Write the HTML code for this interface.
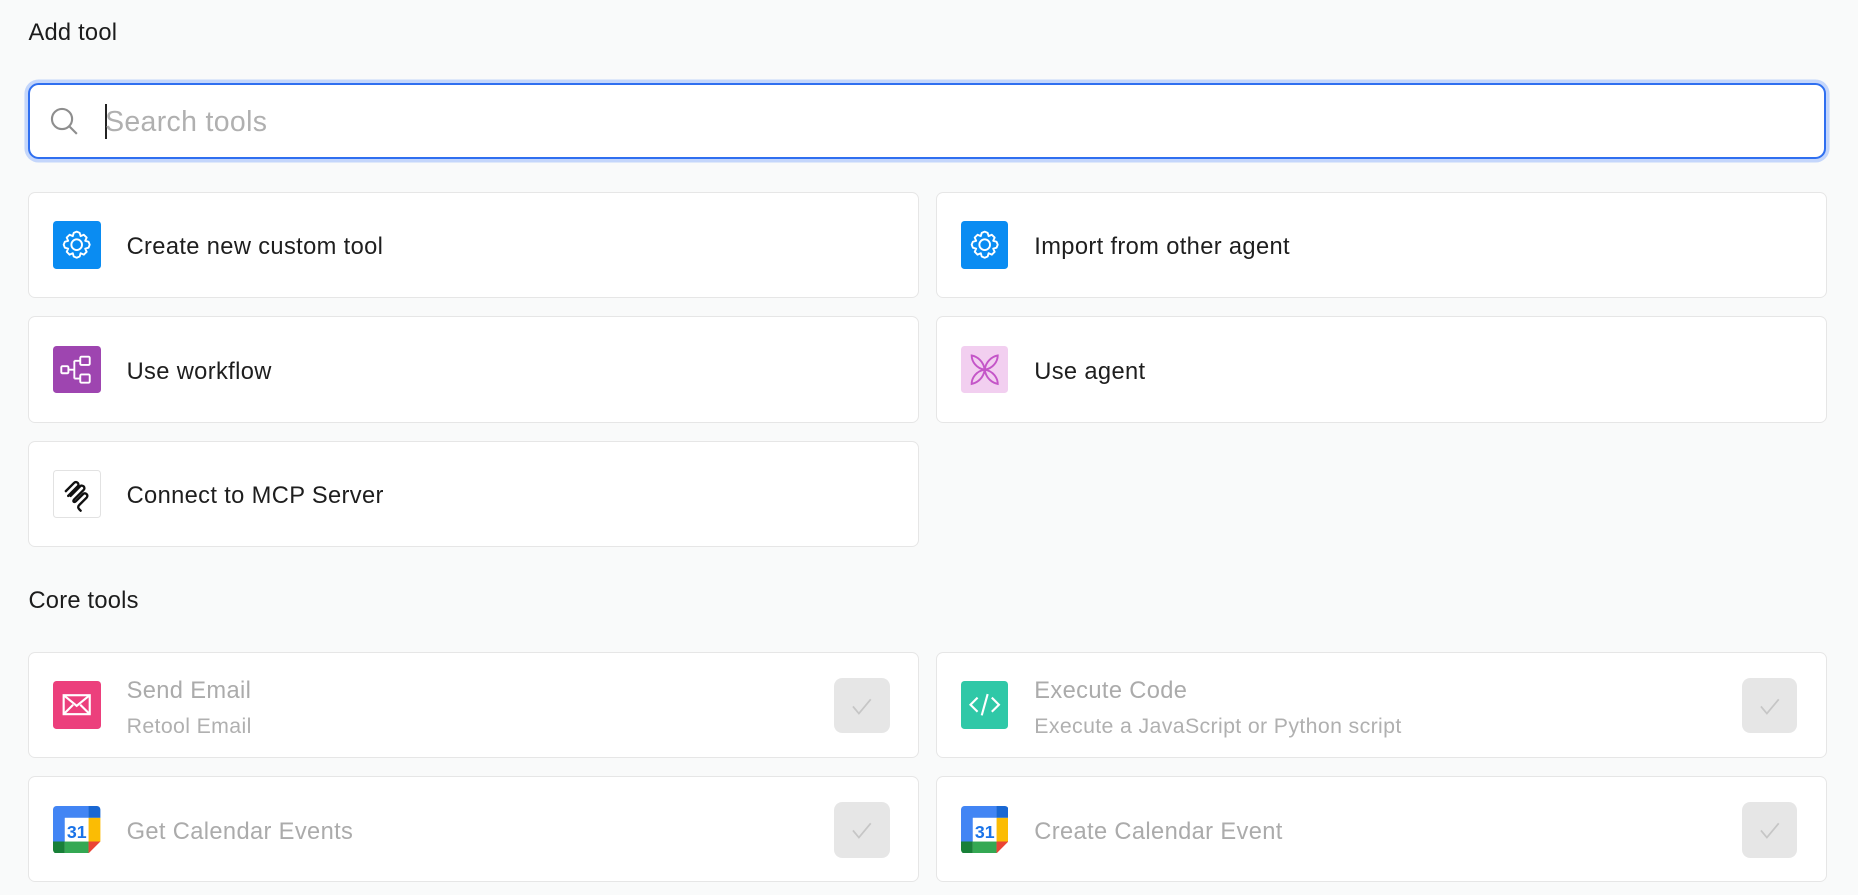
<!DOCTYPE html>
<html><head><meta charset="utf-8"><style>
html,body{margin:0;padding:0;}
body{width:1568px;height:755px;background:#f9fafa;font-family:"Liberation Sans",Arial,sans-serif;zoom:1.18495;overflow:hidden;position:relative;}
.h{position:absolute;left:24px;font-size:20px;color:#1c1c1c;letter-spacing:0.2px;}
.search{position:absolute;left:24px;top:70px;width:1514px;height:61px;border:2px solid #2f6ff0;border-radius:9px;background:#fff;box-shadow:0 0 0 3px #c4d6fb;}
.search .ph{position:absolute;left:63px;top:18px;font-size:24px;color:#b0b0b0;letter-spacing:0.3px;}
.search .cur{position:absolute;left:63px;top:16px;width:1.5px;height:30px;background:#222;}
.card{position:absolute;width:750px;height:88px;background:#fff;border:1.5px solid #e6e6e6;border-radius:6px;box-sizing:content-box;}
.ic{position:absolute;left:20px;top:24px;width:40px;height:40px;border-radius:3px;}
.t{position:absolute;left:82px;top:35px;font-size:20px;color:#1e1e1e;letter-spacing:0.3px;}
.dis .t{color:#ababab;top:21px;}
.sub{position:absolute;left:82px;top:52px;font-size:18px;color:#b0b0b0;letter-spacing:0.3px;}
.chk{position:absolute;right:24px;top:21px;width:47px;height:47px;border-radius:7px;background:#e6e6e6;}
</style></head><body>
<div class="h" style="top:17px">Add tool</div>
<div class="search">
<svg style="position:absolute;left:16px;top:18px" width="26" height="26" viewBox="0 0 26 26"><circle cx="11" cy="11" r="8.5" fill="none" stroke="#8e8e8e" stroke-width="1.8"/><path d="M17 17l6.5 6.5" stroke="#8e8e8e" stroke-width="1.8"/></svg>
<div class="cur"></div><div class="ph">Search tools</div></div>

<div class="card" style="left:24px;top:162px"><div class="ic" style="background:#0a8cf2"><svg width="40" height="40" viewBox="0 0 40 40"><path d="M20 9l2.5 1 .8 2.8 2.7-1.2 2.4 2.4-1.2 2.7 2.8.8 1 2.5-1 2.5-2.8.8 1.2 2.7-2.4 2.4-2.7-1.2-.8 2.8-2.5 1-2.5-1-.8-2.8-2.7 1.2-2.4-2.4 1.2-2.7-2.8-.8-1-2.5 1-2.5 2.8-.8-1.2-2.7 2.4-2.4 2.7 1.2.8-2.8z" fill="none" stroke="#fff" stroke-width="1.6" stroke-linejoin="round"/><circle cx="20" cy="20" r="4.5" fill="none" stroke="#fff" stroke-width="1.6"/></svg></div><div class="t">Create new custom tool</div></div>
<div class="card" style="left:790px;top:162px"><div class="ic" style="background:#0a8cf2"><svg width="40" height="40" viewBox="0 0 40 40"><path d="M20 9l2.5 1 .8 2.8 2.7-1.2 2.4 2.4-1.2 2.7 2.8.8 1 2.5-1 2.5-2.8.8 1.2 2.7-2.4 2.4-2.7-1.2-.8 2.8-2.5 1-2.5-1-.8-2.8-2.7 1.2-2.4-2.4 1.2-2.7-2.8-.8-1-2.5 1-2.5 2.8-.8-1.2-2.7 2.4-2.4 2.7 1.2.8-2.8z" fill="none" stroke="#fff" stroke-width="1.6" stroke-linejoin="round"/><circle cx="20" cy="20" r="4.5" fill="none" stroke="#fff" stroke-width="1.6"/></svg></div><div class="t">Import from other agent</div></div>

<div class="card" style="left:24px;top:267px"><div class="ic" style="background:#9e45b0"><svg width="40" height="40" viewBox="0 0 40 40" fill="none" stroke="#fff" stroke-width="1.6"><rect x="7" y="17" width="6" height="6" rx="1"/><rect x="23" y="9" width="8" height="7" rx="1"/><rect x="23" y="24" width="8" height="7" rx="1"/><path d="M13 20h5M18 12.5v15M18 12.5h5M18 27.5h5"/></svg></div><div class="t">Use workflow</div></div>
<div class="card" style="left:790px;top:267px"><div class="ic" style="background:#f2cff0"><svg width="40" height="40" viewBox="0 0 40 40" fill="none" stroke="#c455c8" stroke-width="1.6"><path d="M20 20C19 13 14 9 9 8c0 5 4 11 11 12zM20 20C21 13 26 9 31 8c0 5-4 11-11 12zM20 20C19 27 14 31 9 32c0-5 4-11 11-12zM20 20C21 27 26 31 31 32c0-5-4-11-11-12z"/></svg></div><div class="t">Use agent</div></div>

<div class="card" style="left:24px;top:372px"><div class="ic" style="background:#fff;border:1px solid #e2e2e2;box-sizing:border-box"><svg width="38" height="38" viewBox="0 0 38 38" fill="none" stroke="#111" stroke-width="2" stroke-linecap="round"><path d="M10 17l7-7c2-2 5 1 3 3l-8 8M14 21l8-8c2-2 5 1 3 3l-8 8c-1.5 1.5 0 3 1.5 1.5l6-6c2-2 5 1 3 3l-6 6c-1.5 1.5-1.5 2.5 0 4l1 1"/></svg></div><div class="t">Connect to MCP Server</div></div>

<div class="h" style="top:496px">Core tools</div>

<div class="card dis" style="left:24px;top:550px"><div class="ic" style="background:#ec3f7c"><svg width="40" height="40" viewBox="0 0 40 40" fill="none" stroke="#fff" stroke-width="1.8"><rect x="9" y="12" width="22" height="16"/><path d="M9 12l11 9 11-9M9 28l8-8M31 28l-8-8"/></svg></div><div class="t">Send Email</div><div class="sub">Retool Email</div><div class="chk"><svg width="47" height="47" viewBox="0 0 47 47"><path d="M16 24l5 6 10-12" fill="none" stroke="#c6c6c6" stroke-width="1.5"/></svg></div></div>
<div class="card dis" style="left:790px;top:550px"><div class="ic" style="background:#2fc8a7"><svg width="40" height="40" viewBox="0 0 40 40" fill="none" stroke="#fff" stroke-width="1.8"><path d="M14 14l-6 6 6 6M26 14l6 6-6 6M22.5 11l-5 18"/></svg></div><div class="t">Execute Code</div><div class="sub">Execute a JavaScript or Python script</div><div class="chk"><svg width="47" height="47" viewBox="0 0 47 47"><path d="M16 24l5 6 10-12" fill="none" stroke="#c6c6c6" stroke-width="1.5"/></svg></div></div>

<div class="card dis" style="left:24px;top:655px"><div class="ic"><svg width="40" height="40" viewBox="0 0 40 40"><path d="M3 0h27v10H10v20H0V3a3 3 0 013-3z" fill="#4285f4"/><path d="M30 0h7a3 3 0 013 3v7H30z" fill="#1967d2"/><rect x="30" y="10" width="10" height="20" fill="#fbbc04"/><path d="M10 30h20v10H10z" fill="#34a853"/><path d="M0 30h10v10H3a3 3 0 01-3-3z" fill="#188038"/><path d="M30 30h10l-10 10z" fill="#ea4335"/><rect x="10" y="10" width="20" height="20" fill="#fff"/><text x="20" y="27" font-size="15" font-weight="bold" fill="#1a73e8" text-anchor="middle" font-family="Liberation Sans">31</text></svg></div><div class="t" style="top:35px">Get Calendar Events</div><div class="chk"><svg width="47" height="47" viewBox="0 0 47 47"><path d="M16 24l5 6 10-12" fill="none" stroke="#c6c6c6" stroke-width="1.5"/></svg></div></div>
<div class="card dis" style="left:790px;top:655px"><div class="ic"><svg width="40" height="40" viewBox="0 0 40 40"><path d="M3 0h27v10H10v20H0V3a3 3 0 013-3z" fill="#4285f4"/><path d="M30 0h7a3 3 0 013 3v7H30z" fill="#1967d2"/><rect x="30" y="10" width="10" height="20" fill="#fbbc04"/><path d="M10 30h20v10H10z" fill="#34a853"/><path d="M0 30h10v10H3a3 3 0 01-3-3z" fill="#188038"/><path d="M30 30h10l-10 10z" fill="#ea4335"/><rect x="10" y="10" width="20" height="20" fill="#fff"/><text x="20" y="27" font-size="15" font-weight="bold" fill="#1a73e8" text-anchor="middle" font-family="Liberation Sans">31</text></svg></div><div class="t" style="top:35px">Create Calendar Event</div><div class="chk"><svg width="47" height="47" viewBox="0 0 47 47"><path d="M16 24l5 6 10-12" fill="none" stroke="#c6c6c6" stroke-width="1.5"/></svg></div></div>
</body></html>
